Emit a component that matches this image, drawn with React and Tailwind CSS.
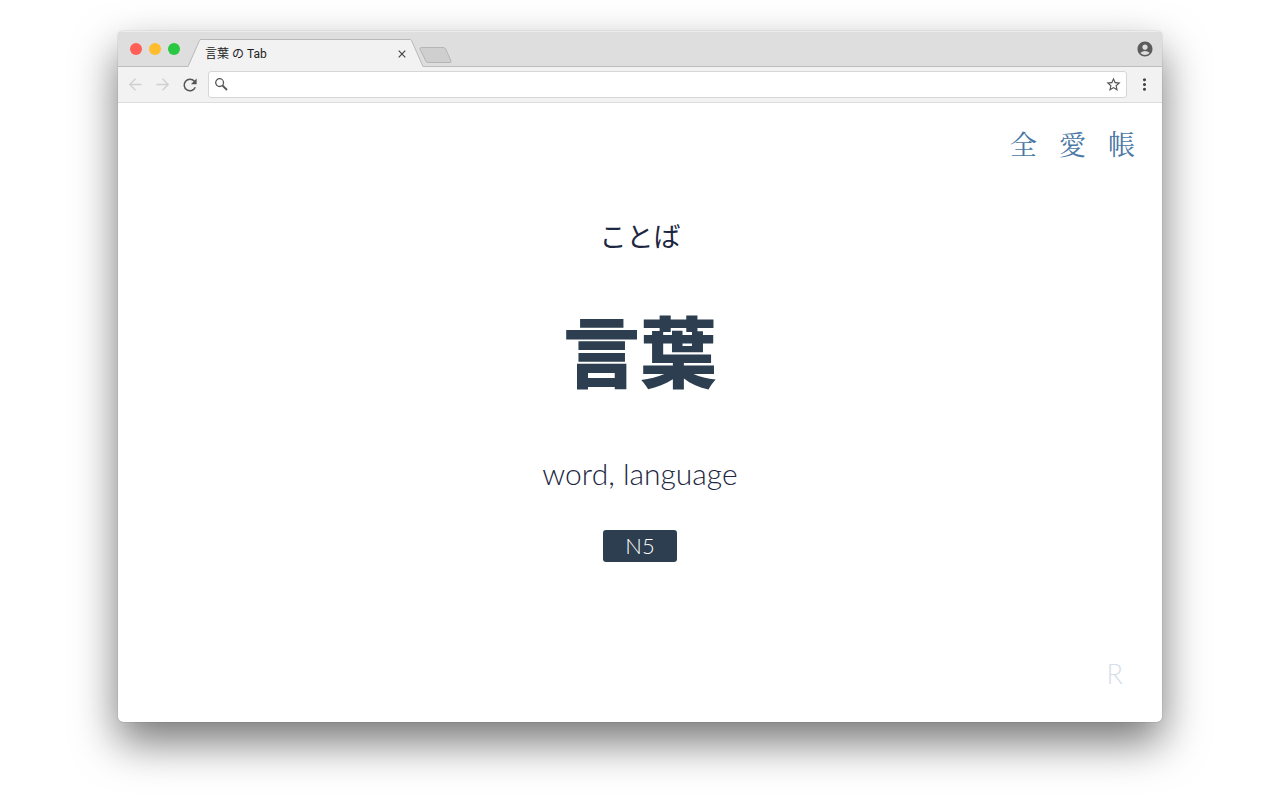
import React from "react";
import { MdAccountCircle, MdMoreVert, MdStarBorder } from "react-icons/md";

const pages = [
  { glyph: "全", label: "All words" },
  { glyph: "愛", label: "Favourites" },
  { glyph: "帳", label: "Notebook" },
];

function ArrowIcon({ className = "" }) {
  return (
    <svg
      width="19"
      height="19"
      viewBox="0 0 19 19"
      fill="none"
      stroke="currentColor"
      strokeWidth="1.4"
      className={className}
      aria-hidden="true"
    >
      <path d="M15.500 9.500H4M9.500 3.800 3.800 9.500 9.500 15.200" />
    </svg>
  );
}

function ReloadIcon() {
  return (
    <svg width="20" height="20" viewBox="0 0 20 20" aria-hidden="true">
      <path
        d="M15.300 12.300A5.800 5.800 0 1 1 14.400 6.200"
        fill="none"
        stroke="currentColor"
        strokeWidth="1.500"
      />
      <path d="M16.600 3.600V9.300H10.900Z" fill="currentColor" />
    </svg>
  );
}

function SearchIcon() {
  return (
    <svg
      width="17"
      height="17"
      viewBox="0 0 17 17"
      fill="none"
      stroke="currentColor"
      className="text-[#555]"
      aria-hidden="true"
    >
      <circle cx="6.600" cy="6.600" r="3.900" strokeWidth="1.300" />
      <path d="M9.500 9.500 14 14" strokeWidth="1.800" />
    </svg>
  );
}

function CloseIcon() {
  return (
    <svg width="12" height="12" viewBox="0 0 12 12" stroke="currentColor" strokeWidth="1.200" aria-hidden="true">
      <path d="M2.700 2.700 9.300 9.300M9.300 2.700 2.700 9.300" />
    </svg>
  );
}

function TrafficLights() {
  return (
    <div className="flex items-center gap-[7px] pl-3">
      <button aria-label="Close window" className="size-3 rounded-full bg-[#ff5f57]" />
      <button aria-label="Minimise window" className="size-3 rounded-full bg-[#ffbd2e]" />
      <button aria-label="Zoom window" className="size-3 rounded-full bg-[#28c940]" />
    </div>
  );
}

function Tab() {
  return (
    <div className="ml-2 flex h-7 self-end">
      <svg width="13" height="28" viewBox="0 0 13 28" aria-hidden="true">
        <path d="M0 28 11.5 1.5Q12 .5 13 .5V28Z" fill="#f2f2f2" />
        <path d="M0 27.5 11.5 1.5Q12 .5 13 .5" fill="none" stroke="#b9b9b9" />
      </svg>
      <div className="flex w-[209px] items-center justify-between border-t border-[#b9b9b9] bg-[#f2f2f2] pl-1 pr-0.5">
        <span className="text-xs leading-6 text-[#222]">言葉 の Tab</span>
        <button aria-label="Close tab" className="text-[#444]">
          <CloseIcon />
        </button>
      </div>
      <svg width="13" height="28" viewBox="0 0 13 28" aria-hidden="true">
        <path d="M13 28 1.5 1.5Q1 .5 0 .5V28Z" fill="#f2f2f2" />
        <path d="M13 27.5 1.5 1.5Q1 .5 0 .5" fill="none" stroke="#b9b9b9" />
      </svg>
    </div>
  );
}

function TabStrip() {
  return (
    <div className="flex h-9 bg-[#dedede] shadow-[inset_0_1px_0_#ededed,inset_0_-1px_0_#bdbdbd]">
      <TrafficLights />
      <Tab />
      <button aria-label="New tab" className="-ml-1 pt-3">
        <svg width="33" height="17" viewBox="0 0 33 17" aria-hidden="true">
          <path
            d="M2.5 .5H24Q26 .5 26.7 2L32 14Q32.5 15.5 31 15.5H9Q7.5 15.5 6.8 14L1 2Q.5 .5 2.5 .5Z"
            fill="#cfcfcf"
            stroke="#b5b5b5"
          />
        </svg>
      </button>
      <button aria-label="Profile" className="ml-auto mr-2 text-[#5c5c5c]">
        <MdAccountCircle size={18} />
      </button>
    </div>
  );
}

function Toolbar() {
  return (
    <div className="flex h-9 items-center border-b border-[#dcdcdc] bg-[#f2f2f2] px-2">
      <div className="flex items-center gap-2">
        <button aria-label="Back" className="text-[#d0d0d0]">
          <ArrowIcon />
        </button>
        <button aria-label="Forward" className="text-[#d0d0d0]">
          <ArrowIcon className="rotate-180" />
        </button>
        <button aria-label="Reload" className="text-[#555]">
          <ReloadIcon />
        </button>
      </div>
      <div className="ml-2 flex h-[27px] flex-1 items-center rounded-[3px] border border-[#d6d6d6] bg-white px-1">
        <SearchIcon />
        <input
          type="text"
          aria-label="Address and search"
          className="min-w-0 flex-1 px-2 text-xs text-[#222] outline-none"
        />
        <button aria-label="Bookmark this page" className="text-[#555]">
          <MdStarBorder size={17} />
        </button>
      </div>
      <button aria-label="Menu" className="ml-2 text-[#444]">
        <MdMoreVert size={19} />
      </button>
    </div>
  );
}

export default function App() {
  return (
    <div className="flex min-h-screen bg-white px-[118px] pb-[78px] pt-[31px] font-['Lato','Noto_Sans_CJK_JP',sans-serif]">
      <div className="flex flex-1 flex-col overflow-hidden rounded-[5px] bg-white shadow-[0_0_1px_rgba(0,0,0,0.5),0_20px_44px_rgba(0,0,0,0.54)]">
        <header className="font-['Roboto','Noto_Sans_CJK_JP',sans-serif]">
          <TabStrip />
          <Toolbar />
        </header>

        <nav className="flex justify-end gap-[22px] px-[27px] pt-[21px]">
          {pages.map((page) => (
            <a
              key={page.glyph}
              href="#"
              aria-label={page.label}
              className="font-['Noto_Serif_CJK_JP','Noto_Sans_CJK_JP',serif] text-[27px] font-normal leading-10 text-[#4a77a4]"
            >
              {page.glyph}
            </a>
          ))}
        </nav>

        <main className="flex flex-1 flex-col items-center pt-[53px] text-[#2c3e50]">
          <p className="text-[27px] font-normal leading-10 text-[#1c2742]">ことば</p>
          <h1 className="mt-[39px] text-[77px] font-black leading-[112px]">言葉</h1>
          <p className="mt-[45px] text-[30px] font-light leading-10 text-[#1c2742]">word, language</p>
          <span className="mt-[37px] rounded-[3px] bg-[#2c3e50] px-[22px] text-[22px] font-light leading-8 text-white">
            N5
          </span>
        </main>

        <footer className="flex justify-end px-[39px] pb-7">
          <a href="#" className="text-[27px] font-light leading-10 text-[#d5deea]">
            R
          </a>
        </footer>
      </div>
    </div>
  );
}
